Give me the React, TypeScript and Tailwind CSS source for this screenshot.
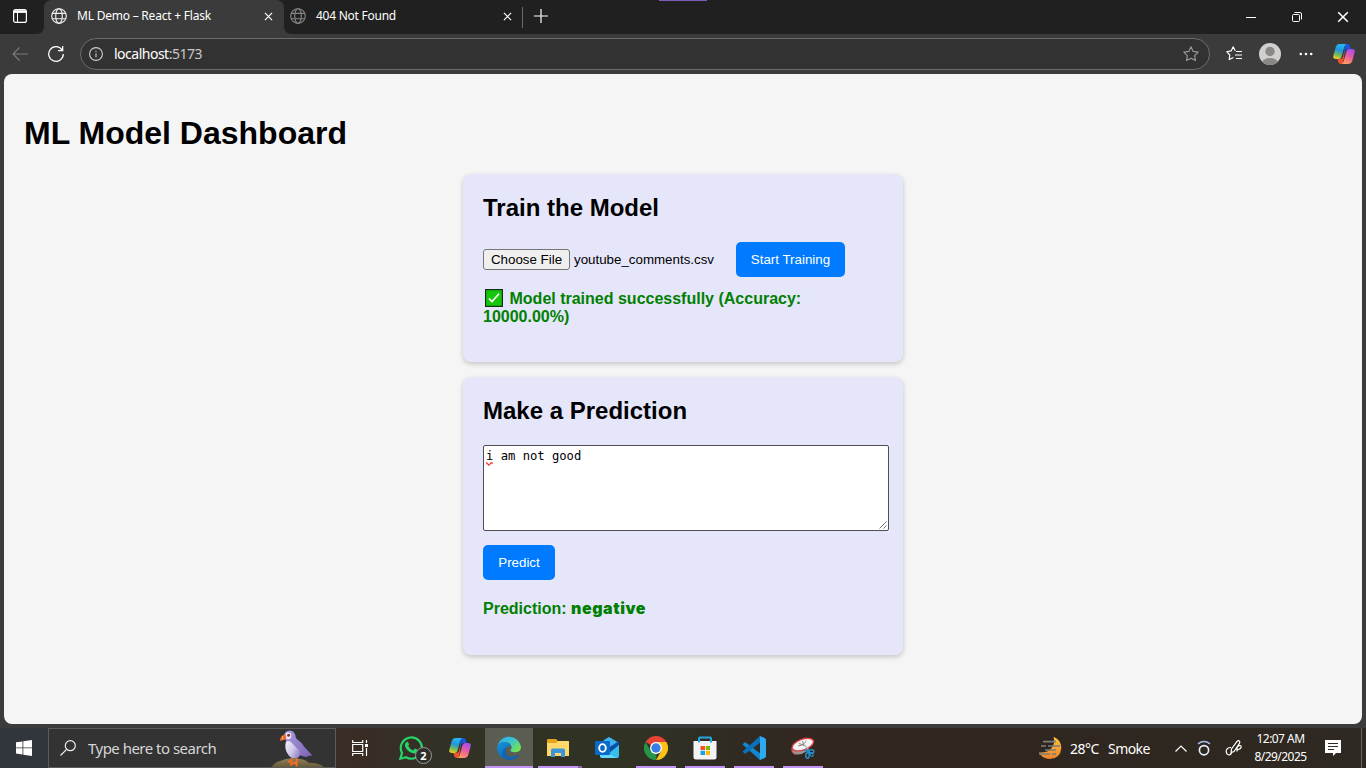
import React from "react";

const Globe = ({ className }: { className: string }) => (
  <svg viewBox="0 0 16 16" className={className} fill="none" stroke="currentColor" strokeWidth="1.15">
    <circle cx="8" cy="8" r="7.3" />
    <ellipse cx="8" cy="8" rx="3.3" ry="7.3" />
    <path d="M1.3 5.3h13.4M1.3 10.7h13.4" />
  </svg>
);

const Cross = ({ className }: { className: string }) => (
  <svg viewBox="0 0 10 10" className={className} fill="none" stroke="currentColor" strokeWidth="1.3">
    <path d="M1 1l8 8M9 1L1 9" />
  </svg>
);

const Copilot = ({ id, className }: { id: string; className: string }) => (
  <svg viewBox="0 0 24 22" className={className}>
    <defs>
      <linearGradient id={id + "a"} x1="0.5" y1="0" x2="0.2" y2="1">
        <stop offset="0" stopColor="#25b8f5" />
        <stop offset="0.4" stopColor="#2196dc" />
        <stop offset="0.7" stopColor="#6fb860" />
        <stop offset="1" stopColor="#f5cf1b" />
      </linearGradient>
      <linearGradient id={id + "b"} x1="0.7" y1="0" x2="0.3" y2="1">
        <stop offset="0" stopColor="#a34df0" />
        <stop offset="0.5" stopColor="#ee5c9b" />
        <stop offset="1" stopColor="#ffa05a" />
      </linearGradient>
    </defs>
    <path d="M13 0h2.800q2 0 2.600 2l1 3.500h-3.500q-2 0-2.600 1.800l-2 7z" fill="#1b55d8" />
    <path d="M11 22H8.500q-2 0-2.700-2L4.600 16.300h3.500q2 0 2.600-1.800l2-7z" fill="#ed5331" />
    <path d="M6.600 0h8.200q-1.700.4-2.300 2.600L9.200 14.200q-.7 2.200-3 2.200H3.100Q-.6 16.400.3 12.800L3 3Q4 0 6.600 0z" fill={`url(#${id}a)`} />
    <path d="M17.400 22H9.200q1.700-.4 2.300-2.600L14.800 7.800q.7-2.200 3-2.200h3.100q3.700 0 2.800 3.600L21 19q-1 3-3.600 3z" fill={`url(#${id}b)`} />
  </svg>
);

function TabStrip() {
  return (
    <div className="relative flex h-[34px] shrink-0 bg-[#202020] text-white">
      <div className="absolute left-[659px] top-0 h-px w-12 bg-[#7e5cb5]" />
      <div className="flex w-11 items-center justify-center rounded-br-lg bg-[#202020] pr-1">
        <svg viewBox="0 0 14 14" className="mb-0.5 h-3.5 w-3.5" fill="none" stroke="white" strokeWidth="1.2">
          <rect x=".6" y=".6" width="12.800" height="12.800" rx="2" />
          <path d="M1 2.600h12" strokeWidth="2.600" />
          <path d="M4.500 3v10" strokeWidth="1" />
        </svg>
      </div>
      <div className="relative flex w-60 items-center rounded-t-lg bg-[#3b3b3b] pb-0.5 pl-[7px]">
        <svg viewBox="0 0 8 8" className="absolute -left-2 bottom-0 h-2 w-2"><path d="M8 0v8H0Q8 8 8 0z" fill="#3b3b3b" /></svg>
        <svg viewBox="0 0 8 8" className="absolute -right-2 bottom-0 h-2 w-2"><path d="M0 0v8h8Q0 8 0 0z" fill="#3b3b3b" /></svg>
        <Globe className="h-4 w-4 text-[#f0f0f0]" />
        <span className="ml-2.5 whitespace-nowrap text-[12px] tracking-[-0.22px]">ML Demo – React + Flask</span>
        <Cross className="absolute right-[11px] top-3 h-[9px] w-[9px]" />
      </div>
      <div className="relative flex w-[238px] items-center pb-0.5 pl-1.5">
        <Globe className="h-4 w-4 text-[#858585]" />
        <span className="ml-2.5 whitespace-nowrap text-[12px] tracking-[-0.25px]">404 Not Found</span>
        <Cross className="absolute right-[10px] top-3 h-[9px] w-[9px]" />
      </div>
      <div className="mt-[7px] h-[21px] w-px bg-[#6b6b6b]" />
      <svg viewBox="0 0 14 14" className="ml-[10.500px] mt-[8.500px] h-3.5 w-3.5" stroke="white" strokeWidth="1.2"><path d="M7 0v14M0 7h14" /></svg>
      <div className="ml-auto flex items-center">
        <div className="flex w-[46px] justify-center"><div className="h-px w-2.5 bg-white" /></div>
        <div className="flex w-[46px] justify-center">
          <svg viewBox="0 0 10 10" className="h-2.5 w-2.5" fill="none" stroke="white" strokeWidth="1"><rect x=".5" y="2.500" width="7" height="7" rx="1" /><path d="M2.500.5h5.500a1.500 1.500 0 0 1 1.500 1.500v5.500" /></svg>
        </div>
        <div className="flex w-[46px] justify-center"><Cross className="h-3 w-3" /></div>
      </div>
    </div>
  );
}

function Toolbar() {
  return (
    <div className="flex h-10 shrink-0 items-center bg-[#3b3b3b] text-white">
      <svg viewBox="0 0 16 14" className="ml-3 h-3.5 w-4" fill="none" stroke="#7c7c7c" strokeWidth="1.1"><path d="M16 7H1M7.500.5L1 7l6.500 6.500" /></svg>
      <svg viewBox="0 0 16 16" className="ml-5 h-4 w-4" fill="none" stroke="white" strokeWidth="1.250"><path d="M15.300 8A7.300 7.300 0 1 1 14 3.800M14.700 0v4.700H10" /></svg>
      <div className="ml-4 flex h-8 w-[1130px] items-center rounded-full border border-[#6b6b6b] bg-[#323232] pl-2 pr-2.5">
        <svg viewBox="0 0 14 14" className="h-3.5 w-3.5" fill="none" stroke="#d0d0d0" strokeWidth="1.100"><circle cx="7" cy="7" r="6.400" /><path d="M7 6.200v4M7 3.700v1.300" /></svg>
        <span className="mb-px ml-[11px] text-[14px] tracking-[-0.5px]">localhost<span className="text-[#c8c8c8]">:5173</span></span>
        <svg viewBox="0 0 16 16" className="ml-auto h-4 w-4" fill="none" stroke="#9a9a9a" strokeWidth="1.1" strokeLinejoin="round"><path d="M8 .8l2.200 4.600 5 .7-3.600 3.500.9 5-4.500-2.400-4.500 2.400.9-5L.8 6.100l5-.7z" /></svg>
      </div>
      <svg viewBox="0 0 16 16" className="ml-4 h-4 w-4" fill="none" stroke="white" strokeWidth="1.150" strokeLinejoin="round"><path d="M9.300 4.900L7.200.8 5.100 4.900.7 5.700l3.100 3.300-.6 4.600 4.200-2.100M10 5.500h6M9 9h7M10 12.500h6" /></svg>
      <svg viewBox="0 0 22 22" className="ml-[17px] h-[22px] w-[22px]">
        <defs><clipPath id="avatar"><circle cx="11" cy="11" r="11" /></clipPath></defs>
        <circle cx="11" cy="11" r="11" fill="#d2d0ce" /><circle cx="11" cy="8.500" r="4.700" fill="#8a8886" /><ellipse cx="11" cy="20" rx="8" ry="5" fill="#8a8886" clipPath="url(#avatar)" />
      </svg>
      <svg viewBox="0 0 14 4" className="ml-[18px] h-1 w-3.5" fill="white"><circle cx="1.800" cy="2" r="1.300" /><circle cx="7" cy="2" r="1.300" /><circle cx="12.200" cy="2" r="1.300" /></svg>
      <Copilot id="nav" className="ml-5 h-5 w-[22px]" />
    </div>
  );
}

function Dashboard() {
  return (
    <main className="mx-1 h-[650px] shrink-0 overflow-hidden rounded-lg bg-[#f5f5f5] px-5 pt-[41px] font-['Liberation_Sans',Arial,sans-serif] text-black">
      <h1 className="text-[32px] font-bold leading-9">ML Model Dashboard</h1>
      <section className="mx-auto mt-[23px] h-[188px] w-[440px] rounded-lg bg-[#e6e6fa] px-5 pt-5 shadow-[0_2px_5px_rgba(0,0,0,0.2)]">
        <h2 className="text-[24px] font-bold leading-[27px]">Train the Model</h2>
        <div className="mt-[21px] flex h-[35px] items-center text-[13.333px]">
          <button className="h-[21px] w-[87px] shrink-0 rounded-[3px] border border-[#767676] bg-[#efefef] leading-none">Choose File</button>
          <span className="ml-1 w-[162px]">youtube_comments.csv</span>
          <button className="h-[35px] w-[109px] rounded-[5px] bg-[#007bff] text-white">Start Training</button>
        </div>
        <p className="mt-[13px] text-[16px] font-bold leading-[18px] text-[#008000]">
          <svg viewBox="0 0 18 18" className="ml-[2px] mr-[6.500px] inline-block h-[18px] w-[18px] -translate-y-px align-[-4px]"><rect x=".6" y=".6" width="16.800" height="16.800" fill="#16c60c" stroke="#12301a" strokeWidth="1.200" /><path d="M4 9.500l3 3 7-7.700" fill="none" stroke="white" strokeWidth="1.700" /></svg>
          Model trained successfully (Accuracy:<br />10000.00%)
        </p>
      </section>
      <section className="mx-auto mt-[15px] h-[278px] w-[440px] rounded-lg bg-[#e6e6fa] px-5 pt-5 shadow-[0_2px_5px_rgba(0,0,0,0.2)]">
        <h2 className="text-[24px] font-bold leading-[27px]">Make a Prediction</h2>
        <div className="relative mt-[21px] h-[86px] w-[406px] rounded-[2px] border border-[#4f4f4f] bg-white px-0.5 pt-[3px] font-['DejaVu_Sans_Mono',monospace] text-[12.180px] leading-[15px]">
          i am not good
          <svg viewBox="0 0 8 4" className="absolute left-0.5 top-4 h-1 w-2" fill="none" stroke="#f33" strokeWidth="1.200"><path d="M0 .8l.8 0L2.800 3.200l2.200-2.400M4 2l1.200-1.200L7 1.500" /></svg>
          <svg viewBox="0 0 8 8" className="absolute bottom-[1px] right-[1px] h-2 w-2" stroke="#555" strokeWidth=".8"><path d="M.5 7.500l7-7M4.500 7.500l3-3" /></svg>
        </div>
        <button className="mt-3.5 block h-[35px] w-[72px] rounded-[5px] bg-[#007bff] text-[13.333px] text-white">Predict</button>
        <p className="mt-[19px] whitespace-nowrap text-[16px] font-bold leading-[18px] text-[#008000]">Prediction: <b className="font-['Inter',sans-serif] text-[16px] font-black tracking-[0.55px]">negative</b></p>
      </section>
    </main>
  );
}

const Slot = ({ children, bar = false, active = false }: { children: React.ReactNode; bar?: boolean; active?: boolean }) => (
  <div className={active ? "relative mr-px flex h-full w-12 items-center justify-center bg-[#5b5c52]" : "relative mr-px flex h-full w-12 items-center justify-center"}>
    {children}
    {bar && <div className={active ? "absolute inset-x-0 bottom-0 h-0.5 bg-[#c093f5]" : "absolute inset-x-1 bottom-0 h-0.5 bg-[#c093f5]"} />}
  </div>
);

function Taskbar() {
  return (
    <footer className="mt-1 flex h-10 shrink-0 bg-[linear-gradient(90deg,#31363c_0%,#33363b_15%,#392c24_26%,#362f28_29%,#303323_36%,#303324_46%,#2f2d24_51%,#32271f_60%,#2f2620_76%,#2e2720_85%,#2e2922_100%)] text-white">
      <div className="flex w-12 items-center justify-center">
        <svg viewBox="0 0 16 16" className="h-4 w-4" fill="white"><path d="M0 2.300L6.500 1.400v6.100H0zM7.300 1.300L16 0v7.500H7.300zM0 8.300h6.500v6.200L0 13.600zM7.300 8.300H16V16l-8.700-1.200z" /></svg>
      </div>
      <div className="relative flex w-72 items-center border border-[#5c5c5c] bg-[#333] pl-[11px] text-[#d6d6d6]">
        <svg viewBox="0 0 16 16" className="h-4 w-4" fill="none" stroke="#eee" strokeWidth="1.200"><circle cx="10.300" cy="5.700" r="5" /><path d="M6.600 9.400L.5 15.500" /></svg>
        <span className="ml-3 text-[15px] tracking-[-0.52px]">Type here to search</span>
        <svg viewBox="0 0 56 38" className="absolute bottom-0 right-[9px] h-[38px] w-14">
          <defs>
            <linearGradient id="wing" x1="0" y1="0" x2="1" y2="1"><stop offset="0" stopColor="#ab9de2" /><stop offset="1" stopColor="#7a63b2" /></linearGradient>
            <linearGradient id="belly" x1="0" y1="0" x2="1" y2=".6"><stop offset="0" stopColor="#f4f2fa" /><stop offset=".6" stopColor="#cfc6e6" /><stop offset="1" stopColor="#9c8acb" /></linearGradient>
            <linearGradient id="rock" x1="0" y1="0" x2="0" y2="1"><stop offset="0" stopColor="#8f8055" /><stop offset="1" stopColor="#665b3c" /></linearGradient>
          </defs>
          <path d="M1.500 38Q5 33 10 32q8-4 19-2.200 6 .5 10 4 10 0 15 4.200z" fill="url(#rock)" />
          <path d="M14 7q.5-5.300 5.800-5.500Q25 2 25.700 8q0 1.500 2.300 3 4 2.500 6.300 7l8.200 8.500-4 .2-2 1.300-7-1.700q-8 4-12-2.300-3-5-1.500-12z" fill="url(#wing)" />
          <path d="M16 13q3-2.500 6 1 3 3.500 7 7 2 5-.5 7.300-6 3-10-2.300Q14 20 16 13z" fill="url(#belly)" />
          <ellipse cx="18.300" cy="6.800" rx="3" ry="3.400" fill="#f0ebf8" /><circle cx="18.600" cy="6.300" r="1.500" fill="#7a3040" />
          <path d="M15.500 5.500q-5 .5-5.700 6l1 .3 4.700-1.500q1.500-2.300 0-4.800z" fill="#f0652d" /><path d="M13 6.800q-1.300 2 0 4" stroke="#ffb36b" fill="none" />
          <path d="M21.500 29l0 3-3.500.7M21.500 32l-.5 4.500M26.500 29l.5 3-2.500 2M27 32l-.5 5.500M26 34l-4 .5" fill="none" stroke="#f36b24" strokeWidth="1.900" />
        </svg>
      </div>
      <div className="flex w-12 items-center justify-center">
        <svg viewBox="0 0 17 16" className="h-4 w-[17px]" fill="none" stroke="white" strokeWidth="1.200"><path d="M.7 0v2.500h10V0M.7 16v-2.500h10V16M.7 4.500h10v7H.7zM14.500 0v3M14.500 8v8" /><path d="M13 4h3v3h-3z" fill="white" stroke="none" /></svg>
      </div>
      <div className="ml-[3px] flex">
        <Slot>
          <div className="relative h-6 w-6">
            <svg viewBox="0 0 24 24" className="h-6 w-6"><path d="M1.300 22.700L3 17A10.600 10.600 0 1 1 7 21.200z" fill="none" stroke="#25d366" strokeWidth="2.200" /><path d="M7.200 6.300q1.300-1.300 2 0l.8 2q.2.700-.8 1.700 1.700 3.200 4.900 4.400l1.200-1.500q.5-.5 1.200-.1l2 1q.8.500.2 1.800-1.300 2.400-4.700 1.600Q8 15.500 6.100 10.500q-.8-2.700 1.100-4.200z" fill="#25d366" /></svg>
            <div className="absolute left-4 top-[11px] flex h-[17px] w-[17px] items-center justify-center rounded-full border border-[#999] bg-[#30302a] text-[11px] font-bold leading-none">2</div>
          </div>
        </Slot>
        <Slot><Copilot id="task" className="h-5 w-[22px]" /></Slot>
        <Slot bar active>
          <svg viewBox="0 0 24 24" className="h-6 w-6">
            <defs>
              <linearGradient id="edgeTop" x1="0" y1="0" x2="1" y2=".7"><stop offset="0" stopColor="#28a8e5" /><stop offset=".5" stopColor="#35c3d5" /><stop offset="1" stopColor="#73e64f" /></linearGradient>
              <linearGradient id="edgeLow" x1="0" y1="0" x2=".8" y2="1"><stop offset="0" stopColor="#1594df" /><stop offset="1" stopColor="#075ca9" /></linearGradient>
            </defs>
            <path d="M.3 10.500A12 12 0 0 1 24 11q0 5-5.500 5.300-3.500.1-5-1.400-.5-.8.400-1.500 1-1.100.6-2.900Q13 6 7.500 6 2.500 6.200.3 10.500z" fill="url(#edgeTop)" />
            <path d="M.1 12Q1 6.600 7 6q5.500-.1 7.300 4.500-3.100-1.600-5.500 1.500-2 4 1.200 7.500 4.500 3.500 11.200-.9.600-.1.200.6A12 12 0 0 1 .1 12z" fill="url(#edgeLow)" />
            <path d="M9.500 11.500Q7.500 18 12 20.500q4 1.800 9.400-1.600l.2.500Q18 24 12.500 24 5 22 5.700 15.500q.5-3 3.800-4z" fill="#1264ae" />
          </svg>
        </Slot>
        <Slot bar>
          <svg viewBox="0 0 22 20" className="h-5 w-[22px]"><path d="M0 2q0-1 1-1h8l2 2h10q1 0 1 1v14H0z" fill="#e4a51b" /><path d="M0 5h9l2-2h10q1 0 1 1v14H0z" fill="#ffd76b" /><path d="M4 19v-7q0-1.500 1.500-1.500h11Q18 10.500 18 12v7h-4v-4H8v4z" fill="#3d96d7" /></svg>
          <div className="absolute bottom-0 right-0 h-0.5 w-2 bg-[#866aa8]" />
        </Slot>
        <Slot>
          <svg viewBox="0 0 24 24" className="h-6 w-6"><path d="M4 7L14 1l10 6v13q0 2-2 2H7q-2 0-2-2z" fill="#0b55b0" /><path d="M9 4l5-3 10 6-10 7-7-3z" fill="#3fb5ee" /><path d="M13 12l11-7v5l-9 6z" fill="#0b4eaa" /><path d="M24 9v11q0 2-2 2H8z" fill="#36bdea" /><path d="M5 13l17 9H7q-2 0-2-2z" fill="#62d8fc" /><rect y="5" width="15" height="14" rx="1.300" fill="#0b69c7" /><ellipse cx="7.500" cy="12" rx="3.300" ry="3.900" fill="none" stroke="white" strokeWidth="1.900" /></svg>
        </Slot>
        <Slot bar>
          <svg viewBox="0 0 24 24" className="h-6 w-6"><path d="M1.600 6A12 12 0 0 1 22.400 6H12v6z" fill="#e64235" /><path d="M22.400 6A12 12 0 0 1 12 24l5.200-9L12 6z" fill="#fbc116" /><path d="M12 24A12 12 0 0 1 1.600 6l5.200 9 6 2z" fill="#269447" /><circle cx="12" cy="12" r="6" fill="white" /><circle cx="12" cy="12" r="4.700" fill="#377ee8" /></svg>
        </Slot>
        <Slot bar>
          <svg viewBox="0 0 24 24" className="h-6 w-6"><path d="M6 7V2.500Q6 1.500 7 1.500h10q1 0 1 1V7" fill="none" stroke="#23a9e1" strokeWidth="2" /><path d="M.5 5h23v16q0 2.500-2.500 2.500H3Q.5 23.500.5 21z" fill="#f3f3f5" /><path d="M7.500 10H12v4H7.500z" fill="#f15327" /><path d="M12.800 10H17v4h-4.200z" fill="#7db800" /><path d="M7.500 14.800H12V19H7.500z" fill="#13a3ea" /><path d="M12.800 14.800H17V19h-4.200z" fill="#ffba08" /><path d="M6 6.500V3M18 6.500V3" stroke="#23a9e1" strokeWidth="2" /></svg>
        </Slot>
        <Slot bar>
          <svg viewBox="0 0 24 24" className="h-6 w-6"><path d="M1.200 7.700l1.300-1.200q.6-.5 1.300 0L18 17.300v6.200q-.6 0-1-.4L.9 8.800q-.6-.6.3-1.100z" fill="#1387cf" /><path d="M1.200 16.300l1.300 1.200q.6.500 1.300 0L18 6.700V.5q-.6 0-1 .4L.9 15.200q-.6.600.3 1.100z" fill="#0b70ba" /><path d="M17 .5q.7-.8 1.700-.3l4.300 2q1 .6 1 1.600v16.400q0 1-1 1.600l-4.300 2q-1 .5-1.700-.3 1 .3 1-1V1.500q0-1.200-1-1z" fill="#2caaf1" /></svg>
        </Slot>
        <Slot bar>
          <svg viewBox="0 0 24 24" className="h-6 w-6"><path d="M.8 12.500Q0 18.500 6 18.500q5 .3 10-3.500l4-6z" fill="#9a9494" /><path d="M.8 12.500Q0 18 6 18.500" fill="none" stroke="#c94545" strokeWidth=".9" /><ellipse cx="11.800" cy="8.600" rx="11.200" ry="5.400" transform="rotate(-20 11.800 8.600)" fill="#f6f4f4" stroke="#dc3d3d" strokeWidth="1.300" /><path d="M7 10q5 0 8.500-5M11.500 5l1.500 5M8 7.500l6 2" fill="none" stroke="#858585" strokeWidth="1" /><path d="M13.500 9l4 4.500" stroke="#b5b5b5" strokeWidth="1.200" /><ellipse cx="20.500" cy="15.500" rx="2.400" ry="1.800" fill="none" stroke="#258dc7" strokeWidth="1.500" /><ellipse cx="16.500" cy="19.500" rx="1.700" ry="2.700" fill="none" stroke="#258dc7" strokeWidth="1.500" /><ellipse cx="20.500" cy="18.500" rx="1.300" ry="2" transform="rotate(-35 20.500 18.500)" fill="none" stroke="#258dc7" strokeWidth="1.200" /><path d="M13 14l5.500 1.700M17 13l1 4" stroke="#258dc7" strokeWidth="1.600" /></svg>
        </Slot>
      </div>
      <div className="ml-auto flex items-center">
        <svg viewBox="0 0 24 24" className="h-6 w-6"><defs><linearGradient id="moon" x1="0" y1="0" x2="0" y2="1"><stop offset="0" stopColor="#ffc535" /><stop offset="1" stopColor="#ee842c" /></linearGradient></defs><path d="M15.500.8Q23.500 4 23.300 12 22.500 22.500 12 23 4 22.500.8 16.500q8 .5 12-3.500 5-5 2.700-12.200z" fill="url(#moon)" /><path d="M5 5.700h13M3 10h5m2 0h12M7 14h11M1 18h11m2 0h4" stroke="#7c7c7c" strokeWidth="1.700" /></svg>
        <span className="ml-2 w-[38px] whitespace-nowrap text-[14px] tracking-[-0.5px]">28°C</span>
        <span className="w-[67px] text-[14px] tracking-[-0.55px]">Smoke</span>
        <svg viewBox="0 0 12 7" className="h-[7px] w-3" fill="none" stroke="white" strokeWidth="1.200"><path d="M.5 6.500L6 1l5.500 5.500" /></svg>
        <svg viewBox="0 0 14 16" className="ml-[10px] h-4 w-3.5" fill="none" stroke="#e5eeff" strokeWidth="1.700"><circle cx="7" cy="10.200" r="4.600" /><path d="M1 3.800q6-4.500 12 0" stroke="#a9c0ea" strokeWidth="1.500" /></svg>
        <svg viewBox="0 0 18 18" className="ml-3.5 h-[18px] w-[18px]" fill="none" stroke="white" strokeWidth="1.200"><path d="M6 8.500Q1.200 8.500 1.200 12.500q.3 3.500 3.300 3.300 2.200-.3 2-3.300M6 13.500l.5-3.500L12 2.500q1.500-1.500 2.500-.3.800 1-.2 2.500L9 12.500zM12 8.500q2.500-3 4-1.500 1 2-2.500 3.500-1.500.5-1.500-2v4" /></svg>
        <div className="ml-[7px] w-[61px] text-center text-[12px] leading-[18px] tracking-[-0.55px]"><div>12:07 AM</div><div>8/29/2025</div></div>
        <svg viewBox="0 0 16 16" className="ml-3.5 h-4 w-4"><path d="M0 0h16v13h-5l-3 3v-3H0z" fill="white" /><path d="M3 3.500h10M3 6.500h10M3 9.500h6" stroke="#302a22" strokeWidth="1" /></svg>
        <div className="ml-5 mr-1 h-10 w-px bg-[#6a6661]" />
      </div>
    </footer>
  );
}

export default function App() {
  return (
    <div className="flex h-screen w-full flex-col overflow-hidden bg-[#3b3b3b] font-['Noto_Sans',sans-serif]">
      <TabStrip />
      <Toolbar />
      <Dashboard />
      <Taskbar />
    </div>
  );
}
